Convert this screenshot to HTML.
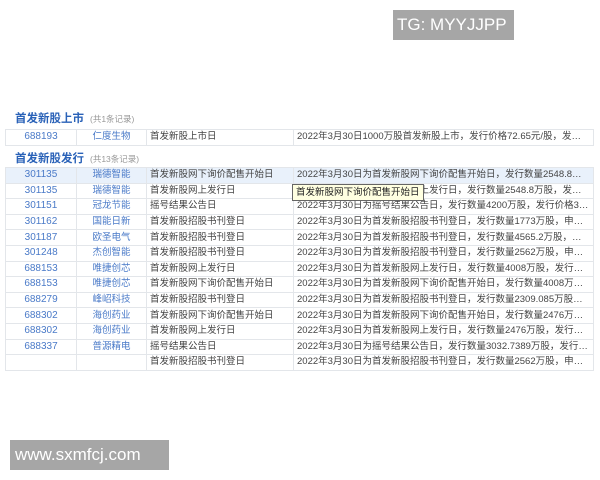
<!DOCTYPE html>
<html><head><meta charset="utf-8"><style>
body{margin:0;width:600px;height:480px;background:#fff;position:relative;overflow:hidden;font-family:"Liberation Sans","Noto Sans CJK SC",sans-serif;}
.h{position:absolute;left:15px;font-size:11.5px;font-weight:bold;color:#2a62b8;}
.h span{font-weight:normal;font-size:8.5px;color:#999;margin-left:6px;}
table{position:absolute;left:5px;border-collapse:collapse;table-layout:fixed;width:589px;font-size:9.5px;}
td{border:1px solid #e3e6ea;height:14.6px;padding:0 3px;white-space:nowrap;overflow:hidden;text-overflow:ellipsis;color:#444;line-height:14px;}
td.c{text-align:center;color:#4a7ac8;}
td.n{font-size:10px;}
tr.hl td{background:#e9f1fb;}
.box{position:absolute;background:#a6a6a6;color:#fff;font-family:"Liberation Sans",sans-serif;}
</style></head><body>
<div class="box" style="left:393px;top:10px;width:121px;height:30px;font-size:17px;line-height:30px;padding-left:4px;box-sizing:border-box;">TG: MYYJJPP</div>
<div class="h" style="top:110px;">首发新股上市<span>(共1条记录)</span></div>
<table style="top:129px;"><colgroup><col style="width:71px"><col style="width:70px"><col style="width:147px"><col></colgroup>
<tr><td class="c n">688193</td><td class="c">仁度生物</td><td>首发新股上市日</td><td>2022年3月30日1000万股首发新股上市，发行价格72.65元/股，发行市盈率...</td></tr></table>
<div class="h" style="top:150px;">首发新股发行<span>(共13条记录)</span></div>
<table style="top:167px;"><colgroup><col style="width:71px"><col style="width:70px"><col style="width:147px"><col></colgroup>
<tr class="hl"><td class="c n">301135</td><td class="c">瑞德智能</td><td>首发新股网下询价配售开始日</td><td>2022年3月30日为首发新股网下询价配售开始日，发行数量2548.8万股，发...</td></tr>
<tr><td class="c n">301135</td><td class="c">瑞德智能</td><td>首发新股网上发行日</td><td>2022年3月30日为首发新股网上发行日，发行数量2548.8万股，发行价格31...</td></tr>
<tr><td class="c n">301151</td><td class="c">冠龙节能</td><td>摇号结果公告日</td><td>2022年3月30日为摇号结果公告日，发行数量4200万股，发行价格30.82元/...</td></tr>
<tr><td class="c n">301162</td><td class="c">国能日新</td><td>首发新股招股书刊登日</td><td>2022年3月30日为首发新股招股书刊登日，发行数量1773万股，申购代码3...</td></tr>
<tr><td class="c n">301187</td><td class="c">欧圣电气</td><td>首发新股招股书刊登日</td><td>2022年3月30日为首发新股招股书刊登日，发行数量4565.2万股，申购代码...</td></tr>
<tr><td class="c n">301248</td><td class="c">杰创智能</td><td>首发新股招股书刊登日</td><td>2022年3月30日为首发新股招股书刊登日，发行数量2562万股，申购代码3...</td></tr>
<tr><td class="c n">688153</td><td class="c">唯捷创芯</td><td>首发新股网上发行日</td><td>2022年3月30日为首发新股网上发行日，发行数量4008万股，发行价格66.6...</td></tr>
<tr><td class="c n">688153</td><td class="c">唯捷创芯</td><td>首发新股网下询价配售开始日</td><td>2022年3月30日为首发新股网下询价配售开始日，发行数量4008万股，发行...</td></tr>
<tr><td class="c n">688279</td><td class="c">峰岹科技</td><td>首发新股招股书刊登日</td><td>2022年3月30日为首发新股招股书刊登日，发行数量2309.085万股，申购代...</td></tr>
<tr><td class="c n">688302</td><td class="c">海创药业</td><td>首发新股网下询价配售开始日</td><td>2022年3月30日为首发新股网下询价配售开始日，发行数量2476万股，发行...</td></tr>
<tr><td class="c n">688302</td><td class="c">海创药业</td><td>首发新股网上发行日</td><td>2022年3月30日为首发新股网上发行日，发行数量2476万股，发行价格42.9...</td></tr>
<tr><td class="c n">688337</td><td class="c">普源精电</td><td>摇号结果公告日</td><td>2022年3月30日为摇号结果公告日，发行数量3032.7389万股，发行价格60...</td></tr>
<tr><td class="c"></td><td class="c"></td><td>首发新股招股书刊登日</td><td>2022年3月30日为首发新股招股书刊登日，发行数量2562万股，申购代码3...</td></tr>
</table>
<div style="position:absolute;left:292px;top:184px;height:15px;padding:0 3px;background:#ffffe1;border:1px solid #666;font-size:9.5px;line-height:15px;color:#222;">首发新股网下询价配售开始日</div>
<div class="box" style="left:10px;top:440px;width:159px;height:30px;font-size:17px;line-height:29px;padding-left:5px;box-sizing:border-box;">www.sxmfcj.com</div>
</body></html>
